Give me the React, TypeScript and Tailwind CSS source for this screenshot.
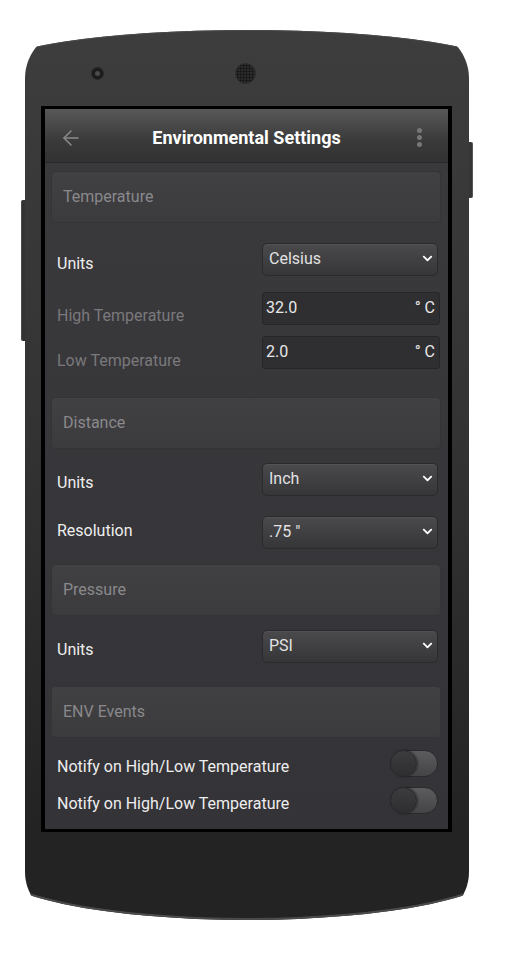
import React from 'react';
import { ArrowLeft } from 'lucide-react';
import { FaChevronDown } from 'react-icons/fa';

const SectionHeader: React.FC<{ title: string; className?: string }> = ({ title, className = '' }) => (
    <div className={`ml-[6px] mr-[7px] h-[52px] shrink-0 flex items-center pl-[11px] rounded-[4px] border border-[#343336] bg-[linear-gradient(to_bottom,#414043,#3b3a3d)] text-[16px] text-[#8a898c] ${className}`}>
        {title}
    </div>
);

const SelectRow: React.FC<{ label: string; value: string; shift?: string; className?: string }> = ({ label, value, shift = '', className = '' }) => (
    <div className={`h-[33px] shrink-0 flex items-center pl-[12px] pr-[10px] ${className}`}>
        <span className={`flex-1 text-[16px] leading-[20px] text-[#eeeeee] ${shift}`}>{label}</span>
        <div className="w-[176px] h-[33px] flex items-center justify-between pl-[6px] pr-[4px] rounded-[5px] border border-[#2a292c] bg-[linear-gradient(to_bottom,#4a494c,#363538)] shadow-[inset_0_1px_0_#525154] text-[16px] text-[#e2e2e2]">
            <span className="-mt-[1px]">{value}</span>
            <FaChevronDown className="w-[11px] h-[11px] text-white -mt-[2px]" />
        </div>
    </div>
);

const InputRow: React.FC<{ label: string; value: string; shift?: string; className?: string }> = ({ label, value, shift = '', className = '' }) => (
    <div className={`h-[33px] shrink-0 flex items-center pl-[12px] pr-[8px] ${className}`}>
        <span className={`flex-1 text-[16px] leading-[20px] text-[#7a797c] ${shift}`}>{label}</span>
        <div className="w-[178px] h-[33px] flex items-center justify-between pl-[3px] pr-[4px] rounded-[3px] border border-[#262528] bg-[#2f2e31] text-[16px] text-[#e8e8e8]">
            <span className="-mt-[1px]">{value}</span>
            <span className="-mt-[1px]">° C</span>
        </div>
    </div>
);

const ToggleRow: React.FC<{ label: string; className?: string }> = ({ label, className = '' }) => (
    <div className={`h-[27px] shrink-0 flex items-center pl-[12px] pr-[10px] ${className}`}>
        <span className="flex-1 translate-y-[3px] text-[16px] leading-[20px] text-[#eeeeee]">{label}</span>
        <div className="w-[48px] h-[27px] rounded-full border border-[#2a292c] bg-[linear-gradient(to_bottom,#5c5b5e,#444346)] flex items-center">
            <div className="w-[27px] h-[27px] -ml-px rounded-full border border-[#29282b] bg-[linear-gradient(to_bottom,#3c3b3e,#2e2d30)] shadow-[1px_0_2px_rgba(0,0,0,0.4)]" />
        </div>
    </div>
);

export default function App() {
    return (
        <div className="min-h-[971px] w-full bg-white pt-[30px] font-['Roboto','Noto_Sans',sans-serif]">
            <div className="relative ml-[21px] w-[453px]">
                {/* side buttons */}
                <div className="absolute left-0 top-[170px] w-[5px] h-[141px] rounded-l-[2px] bg-[#333] border-l border-[#4a4a4a]" />
                <div className="absolute left-[447px] top-[112px] w-[5px] h-[56px] rounded-r-[2px] bg-[#353535] border-r border-[#555]" />

                <div className="relative ml-[4px] w-[444px] h-[890px] overflow-hidden rounded-[48px]">
                    <div className="-ml-[38px] w-[520px] h-full pt-[33px] rounded-tl-[260px_40px] rounded-tr-[260px_40px] rounded-bl-[260px_55px] rounded-br-[260px_55px] bg-[linear-gradient(to_bottom,#3d3d3d,#333333_45%,#232323_90%)] shadow-[inset_0_-2px_0_#4b4b4b,inset_0_1px_0_#4a4a4a]">
                        {/* camera + speaker */}
                        <div className="h-[20px] flex items-center pl-[104px]">
                            <div className="w-[13px] h-[13px] rounded-full bg-[#1c1c1c] border border-[#2a2a2a] flex items-center justify-center">
                                <div className="w-[5px] h-[5px] rounded-full bg-[#4a4a4a]" />
                            </div>
                            <div className="ml-[131px] w-[21px] h-[21px] rounded-full bg-[#2a2a2a] bg-[radial-gradient(circle,#111_0.8px,transparent_1.2px)] bg-[length:3px_3px] border border-[#2e2e2e]" />
                        </div>

                        {/* screen */}
                        <div className="ml-[54px] mt-[23px] w-[411px] h-[726px] border-x-4 border-y-[3px] border-black bg-[linear-gradient(to_bottom,#3a393c,#343337)] flex flex-col overflow-hidden">
                            <div className="h-[54px] shrink-0 grid grid-cols-[1fr_auto_1fr] items-center pt-[4px] px-[14px] border-b border-[#2a2a2a] bg-[linear-gradient(to_bottom,#585858,#3a3a3a_60%,#323232)]">
                                <ArrowLeft className="w-[24px] h-[24px] text-[#8a8a8a]" strokeWidth={1.5} />
                                <span className="text-[18px] font-bold text-white">Environmental Settings</span>
                                <div className="flex flex-col gap-[2px] justify-self-end mr-[12px]">
                                    <span className="w-[5px] h-[5px] rounded-full bg-[#777]" />
                                    <span className="w-[5px] h-[5px] rounded-full bg-[#777]" />
                                    <span className="w-[5px] h-[5px] rounded-full bg-[#777]" />
                                </div>
                            </div>

                            <SectionHeader title="Temperature" className="mt-[8px]" />
                            <SelectRow label="Units" value="Celsius" shift="translate-y-[4px]" className="mt-[20px]" />
                            <InputRow label="High Temperature" value="32.0" shift="translate-y-[7px]" className="mt-[16px]" />
                            <InputRow label="Low Temperature" value="2.0" shift="translate-y-[8px]" className="mt-[11px]" />

                            <SectionHeader title="Distance" className="mt-[28px]" />
                            <SelectRow label="Units" value="Inch" shift="translate-y-[3px]" className="mt-[14px]" />
                            <SelectRow label="Resolution" value={'.75 "'} shift="-translate-y-[2px]" className="mt-[20px]" />

                            <SectionHeader title="Pressure" className="mt-[15px]" />
                            <SelectRow label="Units" value="PSI" shift="translate-y-[3px]" className="mt-[14px]" />

                            <SectionHeader title="ENV Events" className="mt-[23px]" />
                            <ToggleRow label="Notify on High/Low Temperature" className="mt-[12px]" />
                            <ToggleRow label="Notify on High/Low Temperature" className="mt-[10px]" />
                        </div>
                    </div>
                </div>
            </div>
        </div>
    );
}
